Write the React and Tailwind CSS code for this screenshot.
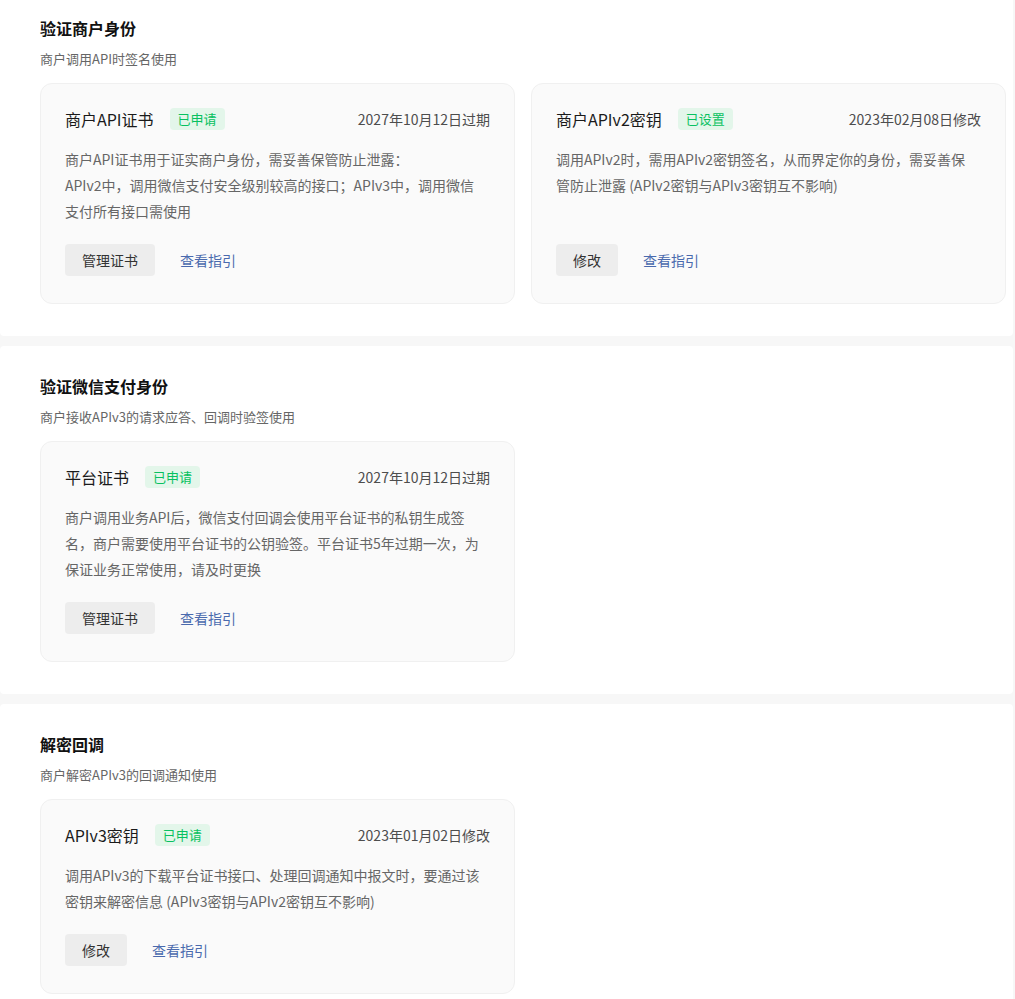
import React from "react";

const sections = [
  {
    title: "验证商户身份",
    subtitle: "商户调用API时签名使用",
    first: true,
    cards: [
      {
        name: "商户API证书",
        badge: "已申请",
        date: "2027年10月12日过期",
        lines: [
          "商户API证书用于证实商户身份，需妥善保管防止泄露：",
          "APIv2中，调用微信支付安全级别较高的接口；APIv3中，调用微信支付所有接口需使用",
        ],
        action: "管理证书",
      },
      {
        name: "商户APIv2密钥",
        badge: "已设置",
        date: "2023年02月08日修改",
        lines: [
          "调用APIv2时，需用APIv2密钥签名，从而界定你的身份，需妥善保管防止泄露 (APIv2密钥与APIv3密钥互不影响)",
        ],
        action: "修改",
      },
    ],
  },
  {
    title: "验证微信支付身份",
    subtitle: "商户接收APIv3的请求应答、回调时验签使用",
    cards: [
      {
        name: "平台证书",
        badge: "已申请",
        date: "2027年10月12日过期",
        lines: [
          "商户调用业务API后，微信支付回调会使用平台证书的私钥生成签名，商户需要使用平台证书的公钥验签。平台证书5年过期一次，为保证业务正常使用，请及时更换",
        ],
        action: "管理证书",
      },
    ],
  },
  {
    title: "解密回调",
    subtitle: "商户解密APIv3的回调通知使用",
    cards: [
      {
        name: "APIv3密钥",
        badge: "已申请",
        date: "2023年01月02日修改",
        lines: [
          "调用APIv3的下载平台证书接口、处理回调通知中报文时，要通过该密钥来解密信息 (APIv3密钥与APIv2密钥互不影响)",
        ],
        action: "修改",
      },
    ],
  },
];

const KeyCard = ({ card }) => (
  <div className="flex flex-col rounded-[12px] border border-[#f0f0f0] bg-[#fafafa] px-6 pt-6 pb-[27px]">
    <div className="flex h-[22px] items-center justify-between">
      <div className="flex items-center">
        <span className="text-[16px] leading-[22px] text-[#1a1a1a]">{card.name}</span>
        <span className="ml-4 rounded-[4px] bg-[#e3f6ea] px-[8px] text-[13px] leading-[22px] text-[#07c160]">
          {card.badge}
        </span>
      </div>
      <span className="text-[14px] leading-[22px] text-[#4d4d4d]">{card.date}</span>
    </div>
    <div className="mt-4 pr-1 text-[14px] leading-[26px] text-[#666]">
      {card.lines.map((l, i) => (
        <p key={i}>{l}</p>
      ))}
    </div>
    <div className="mt-auto flex items-center pt-5">
      <button className="h-8 rounded-[4px] bg-[#ededed] px-[17px] text-[14px] text-[#333]">
        {card.action}
      </button>
      <a className="ml-[25px] text-[14px] text-[#4a6aae]">查看指引</a>
    </div>
  </div>
);

export default function App() {
  return (
    <div
      className="min-h-screen bg-[#f7f7f7]"
      style={{ fontFamily: '"Noto Sans CJK SC", "Noto Sans", sans-serif' }}
    >
      <div className="flex flex-col gap-[10px]">
        {sections.map((s, i) => (
          <section
            key={i}
            className={`mr-[2px] rounded-[4px] bg-white pl-10 pb-8 ${s.first ? "-mt-[12px] pt-7" : "pt-7"}`}
          >
            <h2 className="text-[16px] font-bold leading-6 text-[#111]">{s.title}</h2>
            <p className="mt-2 text-[13px] leading-[22px] text-[#666]">{s.subtitle}</p>
            <div className="mt-[13px] grid grid-cols-[475px_475px] gap-[16px]">
              {s.cards.map((c, j) => (
                <KeyCard key={j} card={c} />
              ))}
            </div>
          </section>
        ))}
      </div>
    </div>
  );
}
